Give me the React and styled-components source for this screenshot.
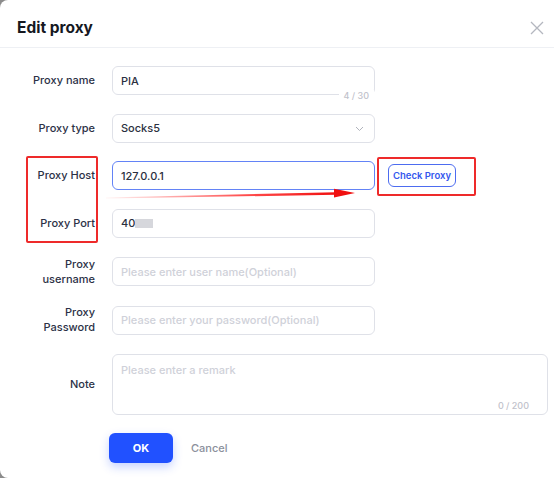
import React from 'react'
import styled, { createGlobalStyle } from 'styled-components';

const GlobalStyle = createGlobalStyle`
  html, body {
    margin: 0;
    padding: 0;
    height: 478px;
    overflow: hidden;
    background: #8c8c8c;
  }
  * { box-sizing: border-box; }
`;

const Dialog = styled.div`
  position: relative;
  width: 580px;
  height: 478px;
  background: #ffffff;
  border-radius: 8px;
  font-family: Inter, "Open Sans", sans-serif;
  color: #2b3040;
  overflow: hidden;
`;

const Header = styled.div`
  height: 48px;
  display: flex;
  align-items: center;
  justify-content: space-between;
  padding: 8px 10px 0 17px;
  width: 554px;
  border-bottom: 1px solid #eef0f4;
`;

const Title = styled.h2`
  margin: 0;
  font-size: 15.5px;
  font-weight: 700;
  color: #16181f;
`;

const Close = styled.button`
  border: 0;
  background: none;
  padding: 0;
  width: 14px;
  height: 14px;
  display: flex;
  cursor: pointer;
`;

const Form = styled.div`
  display: flex;
  flex-direction: column;
  gap: 18.67px;
  padding-top: 18px;
`;

const Row = styled.div`
  display: flex;
  align-items: center;
  min-height: 29px;
`;

const Label = styled.div`
  width: 95px;
  margin-right: 17px;
  text-align: right;
  font-size: 11px;
  font-weight: 500;
  line-height: 15px;
  color: #2c3146;
`;

const Field = styled.div`
  position: relative;
  width: ${p => p.$wide ? '436px' : '263px'};
  height: ${p => p.$tall ? '61px' : '29px'};
  border: 1px solid ${p => p.$focus ? '#6383f6' : '#dfe1e8'};
  border-radius: 6px;
  display: flex;
  align-items: ${p => p.$tall ? 'flex-start' : 'center'};
  padding: ${p => p.$tall ? '8px 8px' : '0 8px'};
  font-size: 11px;
  font-weight: 500;
  color: ${p => p.$placeholder ? '#cfd1d9' : '#2b3040'};
`;

const Counter = styled.span`
  position: absolute;
  right: ${p => p.$inside ? '13px' : '0'};
  bottom: ${p => p.$inside ? '3px' : '-7px'};
  padding: 0 5px;
  background: #fff;
  font-size: 9px;
  line-height: 11px;
  color: #bfc2cb;
`;

const Chevron = styled.svg`
  position: absolute;
  right: 10px;
  top: 11px;
`;

const Blur = styled.span`
  display: inline-block;
  width: 18px;
  height: 9px;
  background: #d6d7dc;
  filter: blur(0.6px);
`;

const CheckButton = styled.button`
  margin-left: 13px;
  height: 23px;
  width: 68px;
  padding: 0;
  border: 1px solid #4d6cf0;
  border-radius: 6px;
  background: #fff;
  color: #3557ee;
  font-family: inherit;
  font-size: 9.5px;
  font-weight: 600;
`;

const Actions = styled.div`
  display: flex;
  align-items: center;
  gap: 18px;
  padding-left: 109px;
  margin-top: -1px;
`;

const OkButton = styled.button`
  width: 64px;
  height: 30px;
  border: 0;
  border-radius: 6px;
  background: #2151ff;
  color: #fff;
  font-family: inherit;
  font-size: 11px;
  font-weight: 700;
  box-shadow: 0 4px 10px rgba(33, 81, 255, 0.25);
`;

const CancelButton = styled.button`
  border: 0;
  background: none;
  color: #8b909c;
  font-family: inherit;
  font-size: 11px;
  font-weight: 500;
  padding: 0;
`;

const Mark = styled.div`
  position: absolute;
  left: ${p => p.$x}px;
  top: ${p => p.$y}px;
  width: ${p => p.$w}px;
  height: ${p => p.$h}px;
  border: 2px solid #ee2a2a;
  border-radius: 2px;
  pointer-events: none;
`;

const Arrow = styled.svg`
  position: absolute;
  left: 100px;
  top: 185px;
  pointer-events: none;
`;

const App = () => {
  return (
    <>
      <GlobalStyle />
      <Dialog>
        <Header>
          <Title>Edit proxy</Title>
          <Close aria-label='close'>
            <svg width='14' height='14' viewBox='0 0 14 14'>
              <path d='M1 1L13 13M13 1L1 13' stroke='#b4b7bf' strokeWidth='1.3' />
            </svg>
          </Close>
        </Header>
        <Form>
          <Row>
            <Label>Proxy name</Label>
            <Field>
              PIA
              <Counter>4 / 30</Counter>
            </Field>
          </Row>
          <Row>
            <Label>Proxy type</Label>
            <Field>
              Socks5
              <Chevron width='9' height='6' viewBox='0 0 9 6'>
                <path d='M1 1L4.5 4.5L8 1' stroke='#b0b3bc' strokeWidth='1' fill='none' />
              </Chevron>
            </Field>
          </Row>
          <Row>
            <Label>Proxy Host</Label>
            <Field $focus>127.0.0.1</Field>
            <CheckButton>Check Proxy</CheckButton>
          </Row>
          <Row>
            <Label>Proxy Port</Label>
            <Field>40<Blur /></Field>
          </Row>
          <Row>
            <Label>Proxy<br />username</Label>
            <Field $placeholder>Please enter user name(Optional)</Field>
          </Row>
          <Row>
            <Label>Proxy<br />Password</Label>
            <Field $placeholder>Please enter your password(Optional)</Field>
          </Row>
          <Row>
            <Label>Note</Label>
            <Field $wide $tall $placeholder>
              Please enter a remark
              <Counter $inside>0 / 200</Counter>
            </Field>
          </Row>
          <Actions>
            <OkButton>OK</OkButton>
            <CancelButton>Cancel</CancelButton>
          </Actions>
        </Form>

        <Mark $x={26} $y={156} $w={72} $h={87} />
        <Mark $x={377} $y={157} $w={99} $h={39} />
        <Arrow width='260' height='18' viewBox='0 0 260 18'>
          <defs>
            <linearGradient id='arrowFade' x1='0' y1='0' x2='1' y2='0'>
              <stop offset='0' stopColor='#ff3b3b' stopOpacity='0.05' />
              <stop offset='0.6' stopColor='#f22' stopOpacity='0.8' />
              <stop offset='1' stopColor='#f01010' stopOpacity='1' />
            </linearGradient>
          </defs>
          <path d='M6 12.4L236 7.2L236 9.8L6 13.6Z' fill='url(#arrowFade)' />
          <path d='M234 3.8L255 8L234 12.6Z' fill='#f01010' />
        </Arrow>
      </Dialog>
    </>
  )
}

export default App;
